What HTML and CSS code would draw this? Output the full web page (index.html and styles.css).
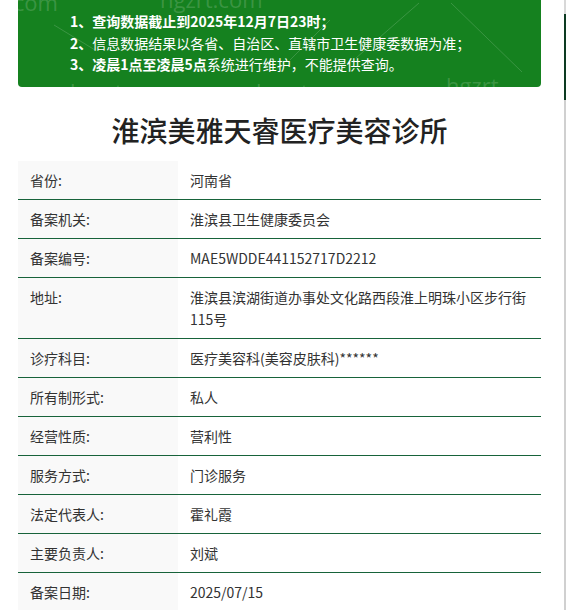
FILE: index.html
```html
<!DOCTYPE html>
<html lang="zh-CN">
<head>
<meta charset="utf-8">
<title>淮滨美雅天睿医疗美容诊所</title>
<link rel="stylesheet" href="styles.css">
</head>
<body>
<div class="page">
  <div class="notice">
    <div class="wm" aria-hidden="true">
      <span class="wm-t t1">.com</span>
      <span class="wm-t t2">hgzrt.com</span>
      <span class="wm-t t3">hgzrt</span>
      <span class="wm-t t4">hgzrt.com</span>
      <span class="wm-t t5">hgzrt.com</span>
      <svg class="wm-lines" width="523" height="86" viewBox="0 0 523 86">
        <line x1="36" y1="25" x2="77" y2="50" />
        <line x1="401" y1="3" x2="338" y2="58" />
        <line x1="433" y1="3" x2="504" y2="72" />
        <line x1="312" y1="20" x2="272" y2="60" />
      </svg>
    </div>
    <p class="b">1、查询数据截止到2025年12月7日23时；</p>
    <p><span class="b">2、</span>信息数据结果以各省、自治区、直辖市卫生健康委数据为准；</p>
    <p><span class="b">3、凌晨1点至凌晨5点</span>系统进行维护，不能提供查询。</p>
  </div>
  <h1 class="title">淮滨美雅天睿医疗美容诊所</h1>
  <div class="table">
    <div class="row"><div class="k">省份:</div><div class="v">河南省</div></div>
    <div class="row"><div class="k">备案机关:</div><div class="v">淮滨县卫生健康委员会</div></div>
    <div class="row"><div class="k">备案编号:</div><div class="v">MAE5WDDE441152717D2212</div></div>
    <div class="row"><div class="k">地址:</div><div class="v">淮滨县滨湖街道办事处文化路西段淮上明珠小区步行街115号</div></div>
    <div class="row"><div class="k">诊疗科目:</div><div class="v">医疗美容科(美容皮肤科)******</div></div>
    <div class="row"><div class="k">所有制形式:</div><div class="v">私人</div></div>
    <div class="row"><div class="k">经营性质:</div><div class="v">营利性</div></div>
    <div class="row"><div class="k">服务方式:</div><div class="v">门诊服务</div></div>
    <div class="row"><div class="k">法定代表人:</div><div class="v">霍礼霞</div></div>
    <div class="row"><div class="k">主要负责人:</div><div class="v">刘斌</div></div>
    <div class="row"><div class="k">备案日期:</div><div class="v">2025/07/15</div></div>
  </div>
</div>
<div class="edge" aria-hidden="true"></div>
</body>
</html>
```
FILE: styles.css
```css
html, body {
  margin: 0;
  padding: 0;
  background: #fff;
}
body {
  font-family: "Noto Sans CJK SC", "Noto Sans", sans-serif;
  color: #333;
  font-size: 14px;
  overflow: hidden;
}
.page {
  width: 523px;
  margin-left: 18px;
}
.notice {
  position: relative;
  overflow: hidden;
  background: #15811f;
  color: #fff;
  border-radius: 0 0 4px 4px;
  padding: 11px 0 11px 52px;
  height: 64.5px;
}
.notice p {
  position: relative;
  margin: 0;
  line-height: 21.5px;
  font-size: 14px;
}
.b {
  font-weight: 700;
}
.title {
  margin: 22px 0 10px;
  text-align: center;
  font-size: 28px;
  line-height: 42px;
  font-weight: 500;
  color: #222;
}
.table {
  display: flex;
  flex-direction: column;
}
.row {
  display: flex;
  border-bottom: 1px solid #17633a;
}
.k {
  width: 160px;
  flex: none;
  box-sizing: border-box;
  background: #f9f9f9;
  padding: 8px 12px;
  line-height: 22px;
  color: #333;
}
.v {
  flex: 1;
  padding: 8px 12px;
  line-height: 22px;
  color: #333;
}
.wm {
  position: absolute;
  left: 0;
  top: 0;
  right: 0;
  bottom: 0;
  pointer-events: none;
}
.wm-t {
  position: absolute;
  font-family: "Open Sans", sans-serif;
  font-size: 22px;
  line-height: 22px;
  color: rgba(220, 235, 220, 0.2);
}
.t1 { left: -10px; top: -9px; }
.t2 { left: 142px; top: -12px; }
.t3 { left: 428px; top: 74px; }
.t4 { left: 52px; top: 80px; }
.t5 { left: 238px; top: 80px; }
.wm-lines {
  position: absolute;
  left: 0;
  top: 0;
}
.wm-lines line {
  stroke: rgba(255, 255, 255, 0.16);
  stroke-width: 1;
}
.edge {
  position: fixed;
  right: 0;
  top: 0;
  width: 2px;
  height: 610px;
  background: linear-gradient(#d8d8d8 0, #d8d8d8 14px, #0d3b22 14px, #0d3b22 100px, #d0d0d0 100px, #d0d0d0 100%);
}
```
